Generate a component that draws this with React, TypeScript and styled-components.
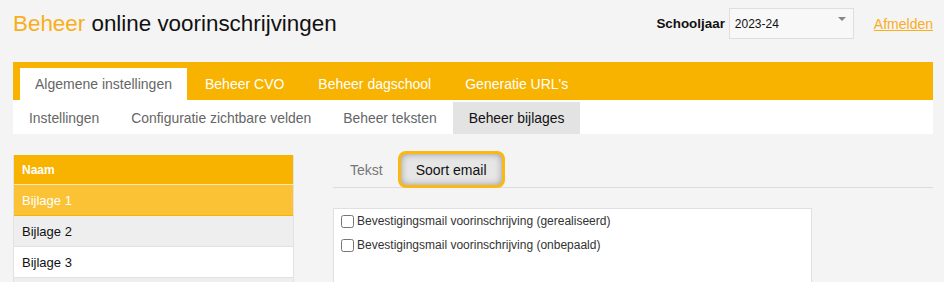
import React, { FC, useState } from 'react';
import styled, { createGlobalStyle, css } from 'styled-components';

const orange = '#f8b200';

const GlobalStyle = createGlobalStyle`
  html, body {
    margin: 0;
    padding: 0;
    background: #f4f4f4;
    font-family: "Liberation Sans", Arial, sans-serif;
  }
`;

const mainTabs = ['Algemene instellingen', 'Beheer CVO', 'Beheer dagschool', "Generatie URL's"];
const subTabs = ['Instellingen', 'Configuratie zichtbare velden', 'Beheer teksten', 'Beheer bijlages'];
const bijlages = ['Bijlage 1', 'Bijlage 2', 'Bijlage 3'];
const mailTypes = [
  'Bevestigingsmail voorinschrijving (gerealiseerd)',
  'Bevestigingsmail voorinschrijving (onbepaald)',
];

const App: FC = (): JSX.Element => {
  const [selected, setSelected] = useState(0);
  const [contentTab, setContentTab] = useState(1);

  return (
    <Page>
      <GlobalStyle />
      <Header>
        <Title>
          <TitleAccent>Beheer</TitleAccent> online voorinschrijvingen
        </Title>
        <HeaderRight>
          <YearLabel>Schooljaar</YearLabel>
          <YearSelect>
            <span>2023-24</span>
            <Caret />
          </YearSelect>
          <Logout href="#">Afmelden</Logout>
        </HeaderRight>
      </Header>

      <MainNav>
        {mainTabs.map((t, i) => (
          <MainTab key={t} active={i === 0}>
            {t}
          </MainTab>
        ))}
      </MainNav>
      <SubNav>
        {subTabs.map((t, i) => (
          <SubTab key={t} active={i === 3}>
            {t}
          </SubTab>
        ))}
      </SubNav>

      <Content>
        <Table>
          <TableHead>Naam</TableHead>
          {bijlages.map((b, i) => (
            <TableRow key={b} selected={i === selected} odd={i % 2 === 1} onClick={() => setSelected(i)}>
              {b}
            </TableRow>
          ))}
          <TableRow odd={true} selected={false} />
        </Table>

        <Detail>
          <DetailTabs>
            {['Tekst', 'Soort email'].map((t, i) => (
              <DetailTab key={t} active={i === contentTab} onClick={() => setContentTab(i)}>
                {t}
              </DetailTab>
            ))}
          </DetailTabs>
          <MailBox>
            {mailTypes.map((m) => (
              <CheckLabel key={m}>
                <CheckBox type="checkbox" />
                {m}
              </CheckLabel>
            ))}
          </MailBox>
        </Detail>
      </Content>
    </Page>
  );
};

interface ActiveProp {
  active: boolean;
}

interface RowProp {
  selected: boolean;
  odd: boolean;
}

const Page = styled.div`
  padding: 0 11px 0 13px;
  height: 282px;
  overflow: hidden;
`;

const Header = styled.div`
  display: flex;
  align-items: flex-start;
  justify-content: space-between;
  height: 62px;
`;

const Title = styled.h1`
  margin: 11px 0 0;
  font-size: 22.4px;
  font-weight: normal;
  color: #111;
`;

const TitleAccent = styled.span`
  color: #f9ae1b;
`;

const HeaderRight = styled.div`
  display: flex;
  align-items: center;
  margin-top: 8px;
`;

const YearLabel = styled.span`
  font-size: 13.4px;
  font-weight: bold;
  color: #111;
  margin-right: 4px;
`;

const YearSelect = styled.div`
  position: relative;
  box-sizing: border-box;
  width: 125px;
  height: 31px;
  border: 1px solid #dedede;
  background: #f8f8f8;
  font-size: 12px;
  color: #111;
  display: flex;
  align-items: center;
  padding-left: 5px;
  margin-right: 20px;
`;

const Caret = styled.span`
  position: absolute;
  right: 7px;
  top: 8px;
  border-left: 4px solid transparent;
  border-right: 4px solid transparent;
  border-top: 4px solid #888;
`;

const Logout = styled.a`
  color: #f9ae1b;
  font-size: 14px;
  text-decoration: underline;
`;

const MainNav = styled.div`
  display: flex;
  background: ${orange};
  height: 38px;
  box-sizing: border-box;
  padding: 6px 0 0 7px;
`;

const MainTab = styled.div<ActiveProp>`
  display: flex;
  align-items: center;
  height: 32px;
  padding: 0 17px;
  font-size: 14px;
  color: #fff;
  ${({ active }) =>
    active &&
    css`
      background: #fff;
      color: #666;
      padding: 0 15px;
      margin-right: 1px;
    `}
`;

const SubNav = styled.div`
  display: flex;
  background: #fff;
  height: 34px;
  box-sizing: border-box;
  padding-top: 2px;
`;

const SubTab = styled.div<ActiveProp>`
  display: flex;
  align-items: center;
  padding: 0 16px;
  font-size: 13.9px;
  color: #666;
  ${({ active }) =>
    active &&
    css`
      background: #e3e3e3;
      color: #111;
    `}
`;

const Content = styled.div`
  display: flex;
  align-items: flex-start;
  margin-top: 21px;
  gap: 39px;
`;

const Table = styled.div`
  width: 281px;
  border-left: 1px solid #e2e2e2;
  border-right: 1px solid #e2e2e2;
  box-sizing: border-box;
`;

const TableHead = styled.div`
  height: 29px;
  display: flex;
  align-items: center;
  padding-left: 8px;
  background: ${orange};
  color: #fff;
  font-weight: bold;
  font-size: 12px;
  border-bottom: 1px solid #fde9b8;
`;

const TableRow = styled.div<RowProp>`
  height: 30px;
  display: flex;
  align-items: center;
  padding-left: 8px;
  font-size: 13px;
  color: #111;
  cursor: pointer;
  background: ${({ odd }) => (odd ? '#eeeeee' : '#fff')};
  border-bottom: 1px solid #e2e2e2;
  ${({ selected }) =>
    selected &&
    css`
      background: #fbc236;
      color: #fff;
      border-bottom-color: ${orange};
    `}
`;

const Detail = styled.div`
  width: 600px;
`;

const DetailTabs = styled.div`
  display: flex;
  height: 32px;
  border-bottom: 1px solid #dcdcdc;
`;

const DetailTab = styled.div<ActiveProp>`
  display: flex;
  align-items: center;
  padding: 0 18px 0 17px;
  height: 31px;
  margin-top: -1px;
  font-size: 14px;
  color: #777;
  cursor: pointer;
  ${({ active }) =>
    active &&
    css`
      padding: 0 15px;
      background: #e6e6e6;
      color: #111;
      border-radius: 5px;
      box-shadow: 0 0 0 3px #fbb713, inset 0 0 7px rgba(0, 0, 0, 0.35);
    `}
`;

const MailBox = styled.div`
  margin-top: 20px;
  width: 479px;
  height: 90px;
  background: #fff;
  border: 1px solid #e0e0e0;
  box-sizing: border-box;
  padding: 0 7px;
`;

const CheckLabel = styled.label`
  display: flex;
  align-items: center;
  font-size: 12px;
  color: #333;
  height: 24px;
`;

const CheckBox = styled.input`
  margin: 0 3px 0 0;
  width: 13px;
  height: 13px;
`;

export default App;
